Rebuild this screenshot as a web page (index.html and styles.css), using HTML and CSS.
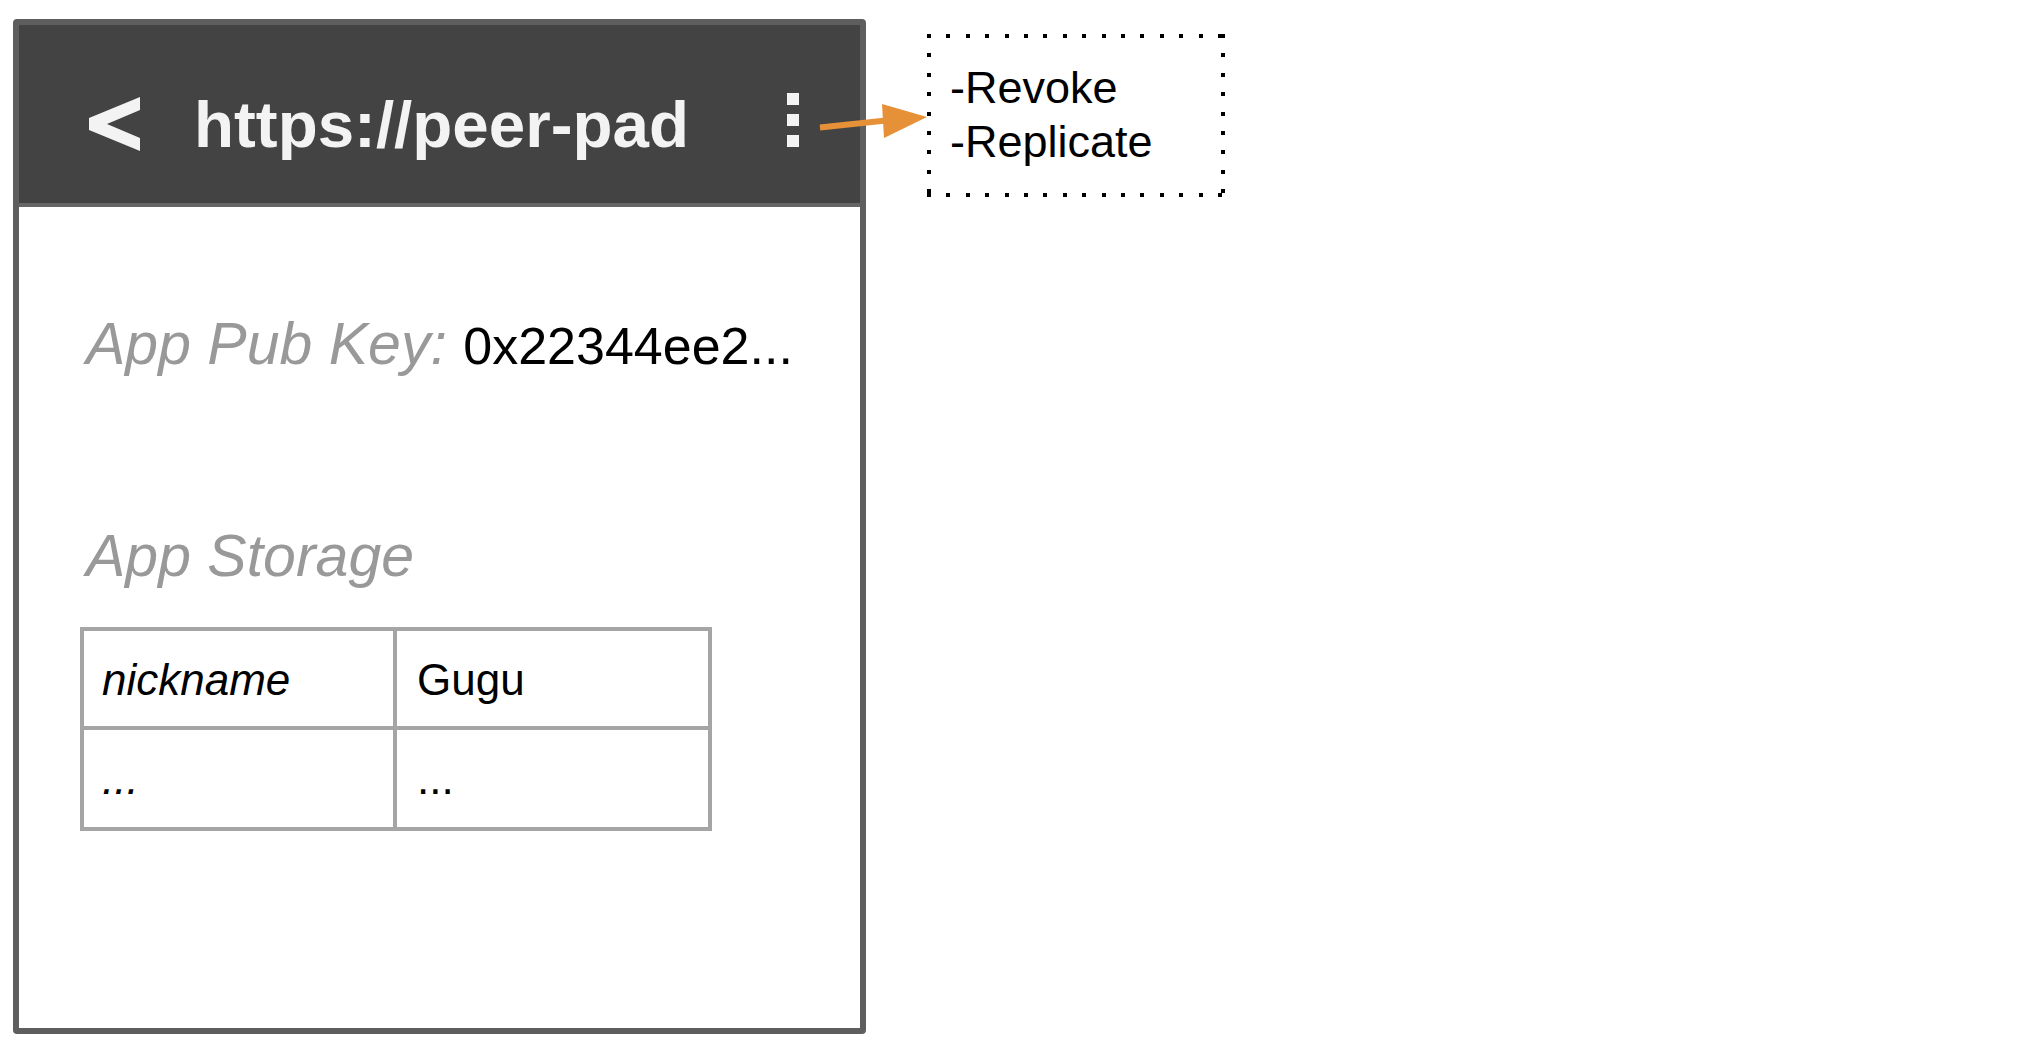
FILE: index.html
```
<!DOCTYPE html>
<html lang="en">
<head>
<meta charset="utf-8">
<title>peer-pad app settings</title>
<link rel="stylesheet" href="styles.css">
</head>
<body>
<div class="stage">
  <div class="phone">
    <header class="bar">
      <svg class="back" width="51" height="54" viewBox="0 0 51 54" aria-label="back">
        <polygon points="51,0 0,21 0,33 51,54 51,41 18,27 51,13" fill="#f3f3f3"/>
      </svg>
      <div class="title">https://peer-pad</div>
      <svg class="kebab" width="12" height="54" viewBox="0 0 12 54" aria-label="menu">
        <rect x="0" y="0" width="12" height="12" fill="#f3f3f3"/>
        <rect x="0" y="21" width="12" height="12" fill="#f3f3f3"/>
        <rect x="0" y="42" width="12" height="12" fill="#f3f3f3"/>
      </svg>
    </header>
    <main class="content">
      <div class="pubkey"><span class="label">App Pub Key:</span> <span class="value">0x22344ee2...</span></div>
      <div class="storage label">App Storage</div>
      <div class="kv">
        <div class="cell key">nickname</div>
        <div class="cell val">Gugu</div>
        <div class="cell key">...</div>
        <div class="cell val">...</div>
      </div>
    </main>
  </div>
  <div class="menu">
    <div>-Revoke</div>
    <div>-Replicate</div>
  </div>
  <svg class="arrow" width="940" height="160" viewBox="0 0 940 160">
    <line x1="820" y1="127.5" x2="886" y2="120.5" stroke="#e69138" stroke-width="6"/>
    <polygon points="882,104 884,138 927,117" fill="#e69138"/>
  </svg>
</div>
</body>
</html>
```
FILE: styles.css
```
* { box-sizing: border-box; }

html, body {
  margin: 0;
  padding: 0;
  background: #ffffff;
}

body {
  font-family: "Liberation Sans", Arial, sans-serif;
  color: #000000;
}

.stage {
  position: relative;
  display: flex;
  align-items: flex-start;
  padding: 19px 0 0 13px;
}

.phone {
  width: 853px;
  height: 1015px;
  border: 6px solid #5e5e5e;
  border-radius: 4px;
  background: #ffffff;
  display: flex;
  flex-direction: column;
}

.bar {
  height: 182px;
  background: #434343;
  border-bottom: 4px solid #666666;
  padding-top: 20px;
  display: flex;
  align-items: center;
}

.back {
  display: block;
  margin-left: 70px;
  flex: none;
}

.title {
  margin-left: 54px;
  font-size: 65.5px;
  line-height: 65px;
  font-weight: bold;
  color: #f3f3f3;
  white-space: nowrap;
}

.kebab {
  display: block;
  margin-left: auto;
  margin-right: 61px;
  margin-bottom: 8px;
  flex: none;
}

.content {
  padding-left: 61px;
}

.label {
  color: #999999;
  font-style: italic;
}

.pubkey {
  margin-top: 104px;
  padding-left: 6px;
  font-size: 59px;
  line-height: 66px;
  white-space: nowrap;
}

.value {
  font-size: 52px;
  color: #000000;
}

.storage {
  margin-top: 144px;
  padding-left: 6px;
  font-size: 59px;
  line-height: 66px;
}

.kv {
  margin-top: 38px;
  width: 632px;
  display: grid;
  grid-template-columns: 313px 315px;
  grid-template-rows: 99px 101px;
  border-top: 4px solid #a5a5a5;
  border-left: 4px solid #a5a5a5;
}

.cell {
  border-right: 4px solid #a5a5a5;
  border-bottom: 4px solid #a5a5a5;
  padding: 24px 0 0 19px;
  font-size: 44px;
  line-height: 50px;
}

.key {
  font-style: italic;
  padding-left: 18px;
}

.val {
  padding-left: 20px;
}

.menu {
  margin: 15px 0 0 61px;
  width: 298px;
  height: 163px;
  padding: 27px 0 0 23px;
  font-size: 45px;
  line-height: 54px;
  background:
    repeating-linear-gradient(90deg, #000 0 4px, transparent 4px 19.4px) left top / 100% 4px no-repeat,
    repeating-linear-gradient(90deg, #000 0 4px, transparent 4px 19.4px) left bottom / 100% 4px no-repeat,
    repeating-linear-gradient(180deg, #000 0 4px, transparent 4px 19.4px) left top / 4px 100% no-repeat,
    repeating-linear-gradient(180deg, #000 0 4px, transparent 4px 19.4px) right top / 4px 100% no-repeat;
}

.arrow {
  position: absolute;
  left: 0;
  top: 0;
  pointer-events: none;
}
```
